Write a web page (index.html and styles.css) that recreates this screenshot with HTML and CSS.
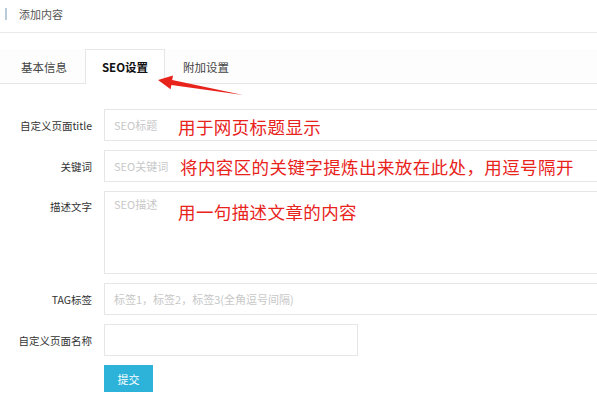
FILE: index.html
```html
<!DOCTYPE html>
<html lang="zh-CN">
<head>
<meta charset="utf-8">
<title>添加内容</title>
<link rel="stylesheet" href="styles.css">
</head>
<body>
<div class="page">
  <div class="header"><span class="header-title">添加内容</span></div>
  <div class="tabbar">
    <div class="tab">基本信息</div>
    <div class="tab active">SEO设置</div>
    <div class="tab">附加设置</div>
  </div>
  <div class="form">
    <div class="row">
      <div class="label">自定义页面title</div>
      <div class="field wide"><span class="ph">SEO标题</span><span class="note n1">用于网页标题显示</span></div>
    </div>
    <div class="row">
      <div class="label">关键词</div>
      <div class="field wide"><span class="ph">SEO关键词</span><span class="note n2">将内容区的关键字提炼出来放在此处，用逗号隔开</span></div>
    </div>
    <div class="row top">
      <div class="label">描述文字</div>
      <div class="field wide area"><span class="ph">SEO描述</span><span class="note n3">用一句描述文章的内容</span></div>
    </div>
    <div class="row">
      <div class="label">TAG标签</div>
      <div class="field wide"><span class="ph">标签1，标签2，标签3(全角逗号间隔)</span></div>
    </div>
    <div class="row">
      <div class="label">自定义页面名称</div>
      <div class="field short"></div>
    </div>
    <div class="row">
      <div class="label"></div>
      <button class="btn">提交</button>
    </div>
  </div>
  <svg class="arrow" width="597" height="120" viewBox="0 0 597 120">
    <polygon points="158,80 173,75.5 172.2,80 243,95 171.4,84.9 170.6,89.3" fill="#e8231c"/>
  </svg>
</div>
</body>
</html>
```
FILE: styles.css
```css
html, body {
  margin: 0;
  padding: 0;
  background: #fff;
  overflow: hidden;
}
body {
  font-family: "Noto Sans CJK SC", "Noto Sans", sans-serif;
  color: #333;
}
.page {
  position: relative;
  width: 597px;
  height: 413px;
  overflow: hidden;
}
.header {
  height: 32px;
  border-bottom: 1px solid #e9e9e9;
  display: flex;
  align-items: center;
  padding-left: 5px;
}
.header-title {
  font-size: 11px;
  color: #555;
  border-left: 2px solid #b7cbd9;
  padding-left: 12px;
  line-height: 12px;
  margin-top: -4px;
}
.tabbar {
  margin-top: 16px;
  height: 34px;
  border-bottom: 1px solid #e6e6e6;
  display: flex;
  padding-left: 4px;
  background: #fdfdfd;
}
.tab {
  width: 80px;
  height: 34px;
  box-sizing: border-box;
  display: flex;
  align-items: center;
  justify-content: center;
  font-size: 11.5px;
  color: #444;
  border: 1px solid transparent;
  border-bottom: none;
}
.tab.active {
  margin-left: 1px;
  margin-right: 1px;
  height: 35px;
  background: #fff;
  border-color: #e6e6e6;
  font-weight: bold;
  color: #111;
}
.form {
  margin-top: 25px;
}
.row {
  display: flex;
  align-items: center;
  margin-bottom: 9px;
}
.row.top {
  align-items: flex-start;
}
.label {
  width: 92px;
  flex: none;
  text-align: right;
  font-size: 10.5px;
  color: #333;
  margin-right: 12px;
}
.row.top .label {
  padding-top: 8px;
}
.field {
  position: relative;
  box-sizing: border-box;
  height: 32px;
  border: 1px solid #e6e6e6;
  background: #fff;
  display: flex;
  align-items: center;
  padding-left: 9px;
  flex: none;
}
.field.wide {
  width: 520px;
}
.field.short {
  width: 254px;
}
.field.area {
  height: 83px;
  align-items: flex-start;
  padding-top: 4px;
}
.ph {
  font-size: 11px;
  color: #c8c8c8;
  white-space: nowrap;
}
.note {
  position: absolute;
  font-size: 17.5px;
  color: #e8231c;
  white-space: nowrap;
  letter-spacing: 0.4px;
}
.n1 { left: 73px; top: 4px; }
.n2 { left: 75px; top: 3px; }
.n3 { left: 73px; top: 7px; }
.btn {
  width: 49px;
  height: 27px;
  border: none;
  background: #2db3da;
  color: #fff;
  font-family: "Noto Sans CJK SC", sans-serif;
  font-size: 11px;
  padding: 0;
}
.arrow {
  position: absolute;
  left: 0;
  top: 0;
  pointer-events: none;
}
```
